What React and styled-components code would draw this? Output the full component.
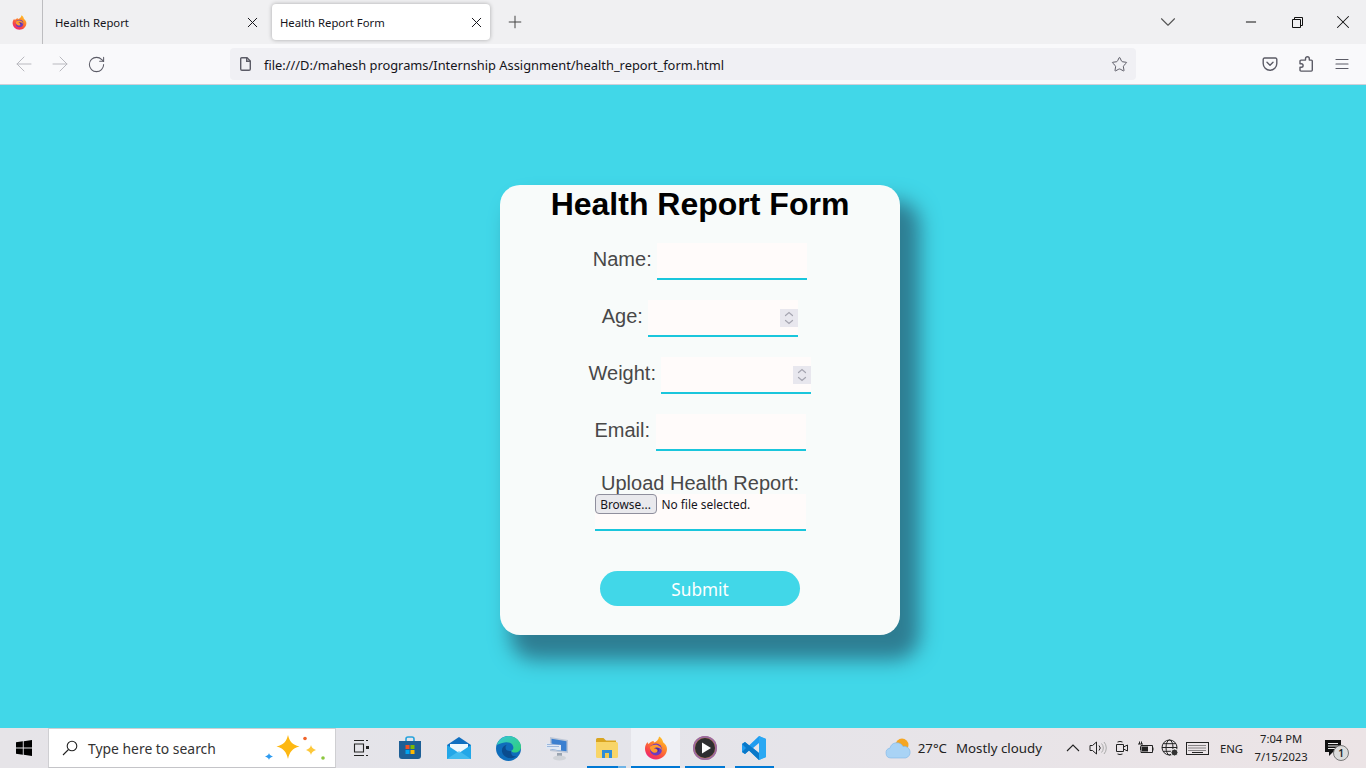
import React from 'react';
import styled, { createGlobalStyle } from 'styled-components';
import { ArrowLeft, ArrowRight, RotateCw, Star, X, Plus, ChevronDown, Minus } from 'lucide-react';

const uiFont = '"Noto Sans", "Open Sans", sans-serif';

const GlobalStyle = createGlobalStyle`
  html, body { margin: 0; padding: 0; height: 100%; overflow: hidden; }
  body { font-family: "Liberation Sans", Arial, sans-serif; }
  * { box-sizing: border-box; }
`;

const Screen = styled.div`
  width: 1366px;
  height: 768px;
  display: flex;
  flex-direction: column;
`;

/* browser chrome */
const TabStrip = styled.div`
  height: 44px;
  flex: none;
  display: flex;
  align-items: center;
  background: #f0f0f2;
  font-family: ${uiFont};
  font-size: 11.3px;
  color: #15141a;
`;

const LogoCell = styled.div`
  width: 43px;
  height: 44px;
  display: flex;
  align-items: center;
  padding-left: 12px;
  border-right: 1px solid #bdbdc0;
`;

const Tab = styled.div`
  width: ${p => p.$width}px;
  height: 36px;
  display: flex;
  align-items: center;
  justify-content: space-between;
  padding: 0 ${p => p.$active ? 5 : 11}px 0 ${p => p.$active ? 8 : 12}px;
  border-radius: 4px;
  background: ${p => p.$active ? '#fff' : 'transparent'};
  box-shadow: ${p => p.$active ? '0 0 4px rgba(0,0,0,.3)' : 'none'};
`;

const NewTab = styled.div`
  margin-left: 15px;
  display: flex;
`;

const WindowButtons = styled.div`
  margin-left: auto;
  display: flex;
  align-items: center;
  color: #111;
`;

const WindowButton = styled.div`
  width: ${p => p.$width || 46}px;
  margin-right: ${p => p.$after || 0}px;
  display: flex;
  justify-content: center;
`;

const NavBar = styled.div`
  height: 41px;
  flex: none;
  display: flex;
  align-items: center;
  padding: 0 0 0 6px;
  background: #f9f9fb;
  border-bottom: 1px solid #cfcfd8;
  color: #5b5b66;
`;

const NavButton = styled.div`
  width: 36px;
  display: flex;
  justify-content: center;
  color: ${p => p.$off ? '#b9b9bf' : '#5b5b66'};
`;

const UrlBar = styled.div`
  width: 906px;
  height: 32px;
  margin-left: 116px;
  padding: 0 8px;
  display: flex;
  align-items: center;
  gap: 10px;
  border-radius: 4px;
  background: #f0f0f4;
`;

const UrlText = styled.span`
  flex: 1;
  padding-top: 1px;
  font-family: ${uiFont};
  font-size: 12.85px;
  color: #15141a;
`;

const NavTools = styled.div`
  margin-left: 116px;
  display: flex;
`;

/* page */
const Page = styled.main`
  flex: 1;
  padding: 100px 0 0 500px;
  background: #41d7e8;
`;

const Card = styled.form`
  width: 400px;
  height: 450px;
  display: flex;
  flex-direction: column;
  align-items: center;
  border-radius: 20px;
  background: #f8fbfa;
  box-shadow: 15px 20px 20px 5px #2e7d92;
`;

const Title = styled.h1`
  margin: 0 0 20px;
  padding-top: 1px;
  font-size: 32px;
  line-height: 37px;
  font-weight: 700;
  color: #000;
`;

const Row = styled.div`
  display: flex;
  gap: 5.5px;
  margin-bottom: 20px;
`;

const Label = styled.label`
  padding-top: 5px;
  font-size: 20px;
  line-height: 23px;
  color: #484848;
`;

const Field = styled.div`
  position: relative;
  width: 150px;
  height: 37px;
`;

const TextInput = styled.input`
  display: block;
  width: 100%;
  height: 100%;
  border: 0;
  border-bottom: 2px solid #1ac6dc;
  outline: 0;
  background: #fffbfa;
`;

const Spinner = styled.div`
  position: absolute;
  top: 9px;
  right: 0;
  width: 18px;
  height: 18px;
  background: #e8e7ee;
  color: #a5a5b0;
`;

const UploadLabel = styled.label`
  padding-top: 1px;
  font-size: 20px;
  line-height: 22px;
  color: #484848;
`;

const FileField = styled.div`
  width: 211px;
  height: 37px;
  margin-bottom: 40px;
  display: flex;
  align-items: flex-start;
  gap: 5px;
  background: #fffbfa;
  border-bottom: 2px solid #1ac6dc;
  font-family: ${uiFont};
  font-size: 11.9px;
  color: #15141a;
`;

const BrowseButton = styled.button`
  width: 62px;
  height: 20px;
  padding: 0;
  border: 1px solid #8f8f9d;
  border-radius: 4px;
  background: #e9e9ed;
  font: inherit;
  color: inherit;
`;

const FileName = styled.span`
  line-height: 21px;
`;

const SubmitButton = styled.button`
  width: 200px;
  height: 35px;
  padding: 2px 0 0;
  border: 0;
  border-radius: 18px;
  background: #41d7e8;
  color: #fff;
  font-family: ${uiFont};
  font-size: 17.2px;
`;

/* taskbar */
const Taskbar = styled.footer`
  height: 40px;
  flex: none;
  display: flex;
  align-items: center;
  background: linear-gradient(90deg, #e6e4e8 0%, #e4e4ea 45%, #ece4e6 100%);
  font-family: ${uiFont};
  color: #222;

  & > * { flex: none; }
`;

const StartButton = styled.div`
  width: 48px;
  display: flex;
  justify-content: center;
`;

const SearchBox = styled.div`
  width: 288px;
  height: 40px;
  padding: 0 9px 0 13px;
  display: flex;
  align-items: center;
  gap: 10px;
  background: #fff;
  border: 1px solid #cfcfd2;
  border-bottom-color: #c4c4c8;
  font-size: 13.9px;
  color: #333;
`;

const SearchHint = styled.span`
  flex: 1;
`;

const TaskSlot = styled.div`
  position: relative;
  width: 49.2px;
  height: 40px;
  display: flex;
  align-items: center;
  justify-content: center;
  background: ${p => p.$active ? '#eff0f5' : 'transparent'};

  &::after {
    content: '';
    display: ${p => p.$inset === undefined ? 'none' : 'block'};
    position: absolute;
    left: ${p => p.$inset}px;
    right: ${p => p.$inset}px;
    bottom: 0;
    height: 2px;
    background: ${p => p.$stacked
      ? 'linear-gradient(90deg, #0078d4 80%, #6fb3e6 80%)'
      : '#0078d4'};
  }
`;

const Weather = styled.div`
  margin-left: 106px;
  display: flex;
  align-items: center;
  font-size: 13.3px;
  white-space: nowrap;
`;

const WeatherText = styled.span`
  margin-left: ${p => p.$gap}px;
`;

const Tray = styled.div`
  margin-left: 22px;
  display: flex;
  align-items: center;
  gap: 7px;
  color: #222;
`;

const Lang = styled.span`
  margin-left: 11px;
  font-size: 11.3px;
`;

const Clock = styled.div`
  width: 64px;
  margin-left: 6px;
  text-align: center;
  font-size: 11.2px;
  line-height: 18px;
`;

const Notify = styled.div`
  position: relative;
  margin-left: 12px;
  display: flex;
`;

const NotifyBadge = styled.span`
  position: absolute;
  right: -8px;
  bottom: -5px;
  width: 16px;
  height: 16px;
  border-radius: 50%;
  border: 1px solid #777;
  background: #dcdcdc;
  text-align: center;
  font-size: 10px;
  line-height: 14px;
  font-weight: 600;
`;

/* drawings */
const Firefox = ({ size = 16, id = 'fx' }) => (
  <svg width={size} height={size} viewBox="0 0 24 24">
    <defs>
      <linearGradient id={id} x1="0.8" y1="0" x2="0.2" y2="1">
        <stop offset="0" stopColor="#ffc928" />
        <stop offset="0.35" stopColor="#ff8a2a" />
        <stop offset="0.75" stopColor="#f8404a" />
        <stop offset="1" stopColor="#e8208a" />
      </linearGradient>
    </defs>
    <path d="M12 23.500C5.500 23.500 1 18.500 1 12.800 1 10 2 7.800 3.500 6c.2 1 .5 1.600 1 2.100C5.800 6.400 7.700 5.200 9.800 5c-.2.700-.1 1.200.3 1.600 2.300-.6 4.500-2.800 5-6.100 2.800 1.700 3.600 4 4 5.700 2.400 1.700 3.900 4 3.900 6.900 0 5.700-4.700 10.400-11 10.400z" fill={`url(#${id})`} />
    <circle cx="12" cy="13.500" r="6" fill="#6d3bc2" />
    <circle cx="12.300" cy="13.800" r="2.700" fill="#4a2aa8" />
    <path d="M6 11c1.800-2 5-2.800 7.800-1.800 2.700 1 4.200 3.400 4.200 5.600-1-2-2.800-3.200-5-3.200-1.200 0-2.300.3-2.900 1 1.600 0 3.500.6 3.500 2.200 0 1.300-1.600 2.300-3.300 1.900C7.800 16.100 5.600 13.800 6 11z" fill="#ff9a2e" />
  </svg>
);

const FileIcon = () => (
  <svg width="16" height="16" viewBox="0 0 16 16" fill="none" stroke="#5b5b66" strokeWidth="1.400">
    <path d="M3.700 1.700h5.300l3.300 3.300v8a1.300 1.300 0 0 1-1.300 1.300H4a1.300 1.300 0 0 1-1.300-1.300V2.700a1 1 0 0 1 1-1z" />
    <path d="M8.700 1.700v3.600h3.600" />
  </svg>
);

const PocketIcon = () => (
  <svg width="16" height="16" viewBox="0 0 16 16" fill="none" stroke="#5b5b66" strokeWidth="1.400" strokeLinecap="round" strokeLinejoin="round">
    <path d="M2.500 2h11A1.300 1.300 0 0 1 14.800 3.300V7.500a6.800 6.800 0 0 1-13.600 0V3.300A1.300 1.300 0 0 1 2.500 2z" />
    <path d="M5 6.300l3 2.900 3-2.900" />
  </svg>
);

const PuzzleIcon = () => (
  <svg width="16" height="16" viewBox="0 0 16 16" fill="none" stroke="#5b5b66" strokeWidth="1.400" strokeLinejoin="round">
    <path d="M7.500 4.300V2.900a1.900 1.900 0 1 1 3.800 0v1.400h2a1 1 0 0 1 1 1v9a1 1 0 0 1-1 1H3a1 1 0 0 1-1-1v-2.800h1.300a1.800 1.800 0 0 0 0-3.600H2V5.300a1 1 0 0 1 1-1z" transform="translate(0 -.2)" />
  </svg>
);

const MenuIcon = () => (
  <svg width="16" height="16" viewBox="0 0 16 16" stroke="#5b5b66" strokeWidth="1.200" strokeLinecap="round">
    <path d="M2 3.500h12M2 8h12M2 12.500h12" />
  </svg>
);

const RestoreIcon = () => (
  <svg width="11" height="11" viewBox="0 0 11 11" fill="none" stroke="#111">
    <path d="M.5 2.500h8v8h-8z" />
    <path d="M2.500 2.500v-2h8v8h-2" />
  </svg>
);

const SpinnerIcon = () => (
  <svg width="18" height="18" viewBox="0 0 18 18" fill="none" stroke="currentColor" strokeWidth="1.200" strokeLinecap="round">
    <path d="M5.500 6.500L9 3.500l3.500 3M5.500 11.500L9 14.500l3.500-3" />
  </svg>
);

const WindowsLogo = () => (
  <svg width="16" height="16" viewBox="0 0 16 16" fill="#000">
    <path d="M0 2.300L6.800 1.300v6.200H0zM7.700 1.200L16 0v7.500H7.700zM0 8.500h6.800v6.200L0 13.700zM7.700 8.500H16V16l-8.300-1.200z" />
  </svg>
);

const SearchIcon = () => (
  <svg width="16" height="16" viewBox="0 0 16 16" fill="none" stroke="#222" strokeWidth="1.100">
    <circle cx="10" cy="6" r="4.800" />
    <path d="M6.500 9.500L1 15" />
  </svg>
);

const Sparkles = () => (
  <svg width="62" height="26" viewBox="0 0 62 26">
    <path d="M24 0c1.600 6.500 4 9.500 11.500 11.500C28 13.500 25.600 17 24 24c-1.600-7-4-10.500-11.500-12.500C20 9.500 22.400 6.500 24 0z" fill="#fdb813" />
    <path d="M47 10c.7 2.600 1.700 3.700 5 5-3.300 1.300-4.300 2.400-5 5-.7-2.600-1.700-3.700-5-5 3.300-1.300 4.300-2.400 5-5z" fill="#fdc83a" />
    <path d="M5 18c.5 1.800 1.200 2.600 4 3.500-2.800.9-3.500 1.700-4 3.500-.5-1.800-1.200-2.600-4-3.500 2.800-.9 3.500-1.700 4-3.500z" fill="#2e9bf0" />
    <circle cx="41" cy="3.500" r="1.800" fill="#f0642a" />
    <circle cx="59" cy="23" r="1.800" fill="#8cc63f" />
  </svg>
);

const TaskViewIcon = () => (
  <svg width="16" height="16" viewBox="0 0 16 16" fill="none" stroke="#222" strokeWidth="1.100">
    <path d="M1 .5h10M1 15.500h10M1.500 4h9v8h-9z" />
    <path d="M13 .5h2M13 15.500h2" />
    <rect x="13" y="6" width="3" height="3" fill="#222" stroke="none" />
  </svg>
);

const StoreIcon = () => (
  <svg width="24" height="24" viewBox="0 0 24 24">
    <path d="M8 6V3a2 2 0 0 1 2-2h4a2 2 0 0 1 2 2v3" fill="none" stroke="#27a3dc" strokeWidth="1.600" />
    <path d="M1 5h22v15a3 3 0 0 1-3 3H4a3 3 0 0 1-3-3z" fill="#1d5f96" />
    <rect x="7.500" y="9" width="4" height="4" fill="#f25022" />
    <rect x="12.500" y="9" width="4" height="4" fill="#7fba00" />
    <rect x="7.500" y="14" width="4" height="4" fill="#00a4ef" />
    <rect x="12.500" y="14" width="4" height="4" fill="#ffb900" />
  </svg>
);

const MailIcon = () => (
  <svg width="24" height="22" viewBox="0 0 24 22">
    <path d="M0 8L12 0l12 8v14H0z" fill="#0f6fc0" />
    <path d="M3 7h18v6l-9 5-9-5z" fill="#eef8fd" />
    <path d="M0 8l12 8 12-8v14H0z" fill="#22a7e8" />
    <path d="M0 22l12-8 12 8z" fill="#4fc3f2" opacity=".7" />
  </svg>
);

const EdgeIcon = () => (
  <svg width="25" height="25" viewBox="0 0 25 25">
    <defs>
      <linearGradient id="edgeA" x1="0" y1="0" x2="1" y2="1">
        <stop offset="0" stopColor="#36c6d8" />
        <stop offset="1" stopColor="#2fd074" />
      </linearGradient>
    </defs>
    <circle cx="12.500" cy="12.500" r="12.500" fill="#0f6dbb" />
    <path d="M.8 9C2.300 3.800 7 0 12.500 0 19.500 0 25 5 25 11c0 3.500-3 5.500-6 5.500-2 0-3.500-.8-3.800-1.800 2-1 2.500-2.500 2-4.200C16.300 7.500 13.500 6 10 6.200 6 6.500 2.500 8 .8 9z" fill="url(#edgeA)" />
    <path d="M15 15c-3 .3-5.500-.6-5.500-3.500 0-1.200.7-2.200 1.500-2.700C7.500 9.300 5.500 12 6 15.500c.6 4 5 7.500 10.500 6.500 1.500-.3 3-1 4-2-2.500 1-5.500.2-5.500-5z" fill="#0a4c8f" />
  </svg>
);

const RemoteIcon = () => (
  <svg width="25" height="25" viewBox="0 0 25 25">
    <path d="M5 1l18 3v13L5 15z" fill="#bcc6d6" />
    <path d="M6.500 2.800l15 2.500v10L6.500 13.500z" fill="#3a7fd0" />
    <path d="M1 7l15 2v5.500L1 12.500z" fill="#dfe8f4" />
    <path d="M2.500 8.500h12M2.500 10.500h12" stroke="#5a86c4" strokeWidth="1" strokeDasharray="1 1" />
    <path d="M12 17h5v3h-5z" fill="#9aa4b0" />
    <ellipse cx="14.500" cy="22" rx="6.500" ry="2.500" fill="#d0d3d8" />
  </svg>
);

const FolderIcon = () => (
  <svg width="22" height="20" viewBox="0 0 22 20">
    <path d="M0 1.500A1.500 1.500 0 0 1 1.500 0h6L10 2.500h10V5H0z" fill="#d9a520" />
    <path d="M0 4h20.500A1.500 1.500 0 0 1 22 5.500V18.500A1.500 1.500 0 0 1 20.500 20h-19A1.500 1.500 0 0 1 0 18.500z" fill="#f8d568" />
    <path d="M6 12h10v8H6z" fill="#2f8dd8" />
    <path d="M9 15h4v5H9z" fill="#f3c94d" />
  </svg>
);

const PlayerIcon = () => (
  <svg width="24" height="24" viewBox="0 0 24 24">
    <circle cx="12" cy="12" r="12" fill="#b8785c" />
    <circle cx="12" cy="12" r="11.200" fill="none" stroke="#9a6aa8" strokeWidth="1.500" />
    <circle cx="12" cy="12" r="10" fill="#2e2e30" />
    <path d="M9 6.500l9 5.500-9 5.500z" fill="#fff" />
  </svg>
);

const VsCodeIcon = () => (
  <svg width="24" height="24" viewBox="0 0 24 24">
    <path d="M17 0l7 3v18l-7 3L7 14.500 3 18 0 16V8l3-2 4 3.500zM17 7l-6 5 6 5z" fill="#1f9cf0" />
    <path d="M17 0l7 3v18l-7 3z" fill="#2aa8f3" />
    <path d="M0 8l3-2 14 11v7L7 14.500 3 18l-3-2 4-4z" fill="#0a78c8" />
  </svg>
);

const CloudIcon = () => (
  <svg width="26" height="22" viewBox="0 0 26 22">
    <circle cx="17" cy="8" r="6.500" fill="#f5a623" />
    <path d="M6 21a5 5 0 0 1-1-9.900A7 7 0 0 1 18 9.500a5.800 5.800 0 0 1 2.500 11.500z" fill="#a9d3f5" stroke="#7fb6e6" strokeWidth=".6" />
  </svg>
);

const CaretIcon = () => (
  <svg width="18" height="18" viewBox="0 0 18 18" fill="none" stroke="#222" strokeWidth="1.100">
    <path d="M3 12l6-6 6 6" />
  </svg>
);

const SpeakerIcon = () => (
  <svg width="18" height="16" viewBox="0 0 18 16" fill="none" stroke="#222" strokeWidth="1">
    <path d="M1 5.500h2.500L7.500 2v12l-4-3.500H1z" />
    <path d="M10 5.500a3.500 3.500 0 0 1 0 5" />
    <path d="M12.500 3.500a6.500 6.500 0 0 1 0 9M15 2a9 9 0 0 1 0 12" stroke="#aaa" />
  </svg>
);

const MeetIcon = () => (
  <svg width="16" height="16" viewBox="0 0 16 16" fill="none" stroke="#222" strokeWidth="1">
    <path d="M2.500 4.500h7v7h-7zM9.500 7l4-2v6l-4-2z" />
    <path d="M3.500 2a6 6 0 0 1 5 0M3.500 14a6 6 0 0 0 5 0" />
  </svg>
);

const BatteryIcon = () => (
  <svg width="17" height="14" viewBox="0 0 17 14" fill="none" stroke="#222" strokeWidth="1">
    <path d="M4 4.500h11.500v7H4z" />
    <rect x="5" y="5.500" width="6" height="5" fill="#222" stroke="none" />
    <path d="M16 6.500v3M1 3h5M2.500.5V3M4.500.5V3M3.500 5.500V9" />
  </svg>
);

const GlobeIcon = () => (
  <svg width="18" height="18" viewBox="0 0 18 18" fill="none" stroke="#222" strokeWidth="1">
    <circle cx="8.500" cy="8.500" r="7.500" />
    <ellipse cx="8.500" cy="8.500" rx="3.500" ry="7.500" />
    <path d="M1 8.500h15M2 4.700h13M2 12.300h13" />
    <circle cx="13.500" cy="13.500" r="3.500" fill="#333" stroke="#eee" />
  </svg>
);

const KeyboardIcon = () => (
  <svg width="23" height="13" viewBox="0 0 23 13" fill="none" stroke="#222" strokeWidth="1">
    <rect x=".5" y=".5" width="22" height="12" />
    <path d="M2.500 3.500h18M2.500 6h18M2.500 8.500h18" strokeDasharray="1 1" />
    <path d="M6 10.500h11" />
  </svg>
);

const NotifyIcon = () => (
  <svg width="16" height="16" viewBox="0 0 16 16">
    <path d="M0 0h16v12H8l-4 4v-4H0z" fill="#111" />
    <path d="M3 3.500h10M3 6h10M3 8.500h7" stroke="#eee" strokeWidth="1" />
  </svg>
);

export default function App() {
  return (
    <>
      <GlobalStyle />
      <Screen>
        <TabStrip>
          <LogoCell><Firefox size={15} id="fxTab" /></LogoCell>
          <Tab $width={229}>
            Health Report
            <X size={17} strokeWidth={1.4} />
          </Tab>
          <Tab $width={218} $active>
            Health Report Form
            <X size={17} strokeWidth={1.4} />
          </Tab>
          <NewTab><Plus size={20} strokeWidth={1.2} color="#444" /></NewTab>
          <WindowButtons>
            <WindowButton $width={60} $after={30}><ChevronDown size={26} strokeWidth={1} color="#555" /></WindowButton>
            <WindowButton><Minus size={16} strokeWidth={1.5} /></WindowButton>
            <WindowButton><RestoreIcon /></WindowButton>
            <WindowButton><X size={22} strokeWidth={1.1} /></WindowButton>
          </WindowButtons>
        </TabStrip>

        <NavBar>
          <NavButton $off><ArrowLeft size={24} strokeWidth={1} /></NavButton>
          <NavButton $off><ArrowRight size={24} strokeWidth={1} /></NavButton>
          <NavButton><RotateCw size={19} strokeWidth={1.3} /></NavButton>
          <UrlBar>
            <FileIcon />
            <UrlText>file:///D:/mahesh programs/Internship Assignment/health_report_form.html</UrlText>
            <Star size={17} strokeWidth={1.4} />
          </UrlBar>
          <NavTools>
            <NavButton><PocketIcon /></NavButton>
            <NavButton><PuzzleIcon /></NavButton>
            <NavButton><MenuIcon /></NavButton>
          </NavTools>
        </NavBar>

        <Page>
          <Card onSubmit={e => e.preventDefault()}>
            <Title>Health Report Form</Title>
            <Row>
              <Label>Name:</Label>
              <Field><TextInput type="text" /></Field>
            </Row>
            <Row>
              <Label>Age:</Label>
              <Field>
                <TextInput type="text" />
                <Spinner><SpinnerIcon /></Spinner>
              </Field>
            </Row>
            <Row>
              <Label>Weight:</Label>
              <Field>
                <TextInput type="text" />
                <Spinner><SpinnerIcon /></Spinner>
              </Field>
            </Row>
            <Row>
              <Label>Email:</Label>
              <Field><TextInput type="text" /></Field>
            </Row>
            <UploadLabel>Upload Health Report:</UploadLabel>
            <FileField>
              <BrowseButton type="button">Browse...</BrowseButton>
              <FileName>No file selected.</FileName>
            </FileField>
            <SubmitButton type="submit">Submit</SubmitButton>
          </Card>
        </Page>

        <Taskbar>
          <StartButton><WindowsLogo /></StartButton>
          <SearchBox>
            <SearchIcon />
            <SearchHint>Type here to search</SearchHint>
            <Sparkles />
          </SearchBox>
          <TaskSlot><TaskViewIcon /></TaskSlot>
          <TaskSlot><StoreIcon /></TaskSlot>
          <TaskSlot><MailIcon /></TaskSlot>
          <TaskSlot><EdgeIcon /></TaskSlot>
          <TaskSlot><RemoteIcon /></TaskSlot>
          <TaskSlot $inset={5} $stacked><FolderIcon /></TaskSlot>
          <TaskSlot $active $inset={0}><Firefox size={24} id="fxBar" /></TaskSlot>
          <TaskSlot $inset={5}><PlayerIcon /></TaskSlot>
          <TaskSlot $inset={5}><VsCodeIcon /></TaskSlot>
          <Weather>
            <CloudIcon />
            <WeatherText $gap={7}>27°C</WeatherText>
            <WeatherText $gap={9}>Mostly cloudy</WeatherText>
          </Weather>
          <Tray>
            <CaretIcon />
            <SpeakerIcon />
            <MeetIcon />
            <BatteryIcon />
            <GlobeIcon />
            <KeyboardIcon />
          </Tray>
          <Lang>ENG</Lang>
          <Clock>7:04 PM<br />7/15/2023</Clock>
          <Notify>
            <NotifyIcon />
            <NotifyBadge>1</NotifyBadge>
          </Notify>
        </Taskbar>
      </Screen>
    </>
  );
}
